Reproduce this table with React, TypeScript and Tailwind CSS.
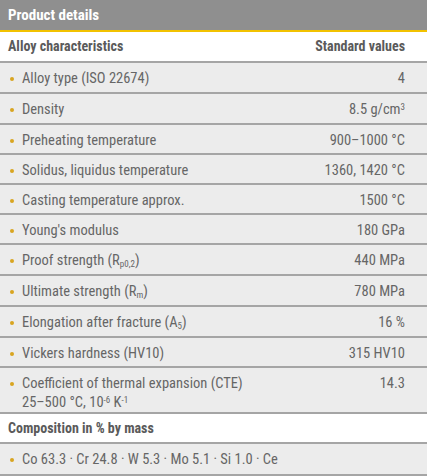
import React from "react";

const font: React.CSSProperties = { fontFamily: 'Roboto, "Open Sans", sans-serif', fontStretch: "75%" };

type Row = { label: React.ReactNode; value: React.ReactNode; h: string };

const rows: Row[] = [
  { label: "Alloy type (ISO 22674)", value: "4", h: "h-[31px]" },
  { label: "Density", value: <>8.5 g/cm<sup className="text-[9px]">3</sup></>, h: "h-[31px]" },
  { label: "Preheating temperature", value: "900–1000 °C", h: "h-[30px]" },
  { label: "Solidus, liquidus temperature", value: "1360, 1420 °C", h: "h-[30px]" },
  { label: "Casting temperature approx.", value: "1500 °C", h: "h-[30px]" },
  { label: "Young's modulus", value: "180 GPa", h: "h-[30px]" },
  { label: <>Proof strength (R<sub className="text-[9px]">p0,2</sub>)</>, value: "440 MPa", h: "h-[31px]" },
  { label: <>Ultimate strength (R<sub className="text-[9px]">m</sub>)</>, value: "780 MPa", h: "h-[31px]" },
  { label: <>Elongation after fracture (A<sub className="text-[9px]">5</sub>)</>, value: "16 %", h: "h-[31px]" },
  { label: "Vickers hardness (HV10)", value: "315 HV10", h: "h-[30px]" },
  {
    label: (
      <>
        Coefficient of thermal expansion (CTE)
        <br />
        25–500 °C, 10<sup className="text-[9px]">-6</sup> K<sup className="text-[9px]">-1</sup>
      </>
    ),
    value: "14.3",
    h: "h-[46px]",
  },
];

function Bullet() {
  return <span className="mt-[8px] h-[4px] w-[4px] shrink-0 rounded-full bg-[#d9a520]" />;
}

function DataRow({ r }: { r: Row }) {
  return (
    <div className={`flex items-start border-b-[2px] border-[#a5a5a5] bg-[#ececec] pl-[10px] pr-[22px] pt-[6px] ${r.h}`}>
      <Bullet />
      <div className="ml-[8px] flex-1 text-[14.5px] leading-[19px] text-[#666666]">{r.label}</div>
      <div className="text-right text-[14.5px] leading-[19px] text-[#666666]">{r.value}</div>
    </div>
  );
}

export default function App() {
  return (
    <div className="w-[427px] h-[476px] bg-white" style={font}>
      <div className="h-[30px] bg-[#8f8f8f] pl-[8px] flex items-center text-[15px] font-bold text-white">
        Product details
      </div>
      <div className="h-[2px] bg-[#f2c200]" />
      <div className="h-[31px] flex items-center justify-between border-b-[2px] border-[#a5a5a5] bg-white pl-[8px] pr-[22px] text-[14px] font-bold text-[#5a5a5a]">
        <span>Alloy characteristics</span>
        <span>Standard values</span>
      </div>
      {rows.map((r, i) => (
        <DataRow key={i} r={r} />
      ))}
      <div className="h-[30px] flex items-center border-b-[2px] border-[#a5a5a5] bg-white pl-[8px] text-[14px] font-bold text-[#5a5a5a]">
        Composition in % by mass
      </div>
      <div className="flex h-[32px] items-start border-b-[2px] border-[#a5a5a5] bg-[#ececec] pl-[10px] pt-[6px]">
        <Bullet />
        <div className="ml-[8px] text-[14.5px] leading-[19px] text-[#666666]">Co 63.3 · Cr 24.8 · W 5.3 · Mo 5.1 · Si 1.0 · Ce</div>
      </div>
    </div>
  );
}
